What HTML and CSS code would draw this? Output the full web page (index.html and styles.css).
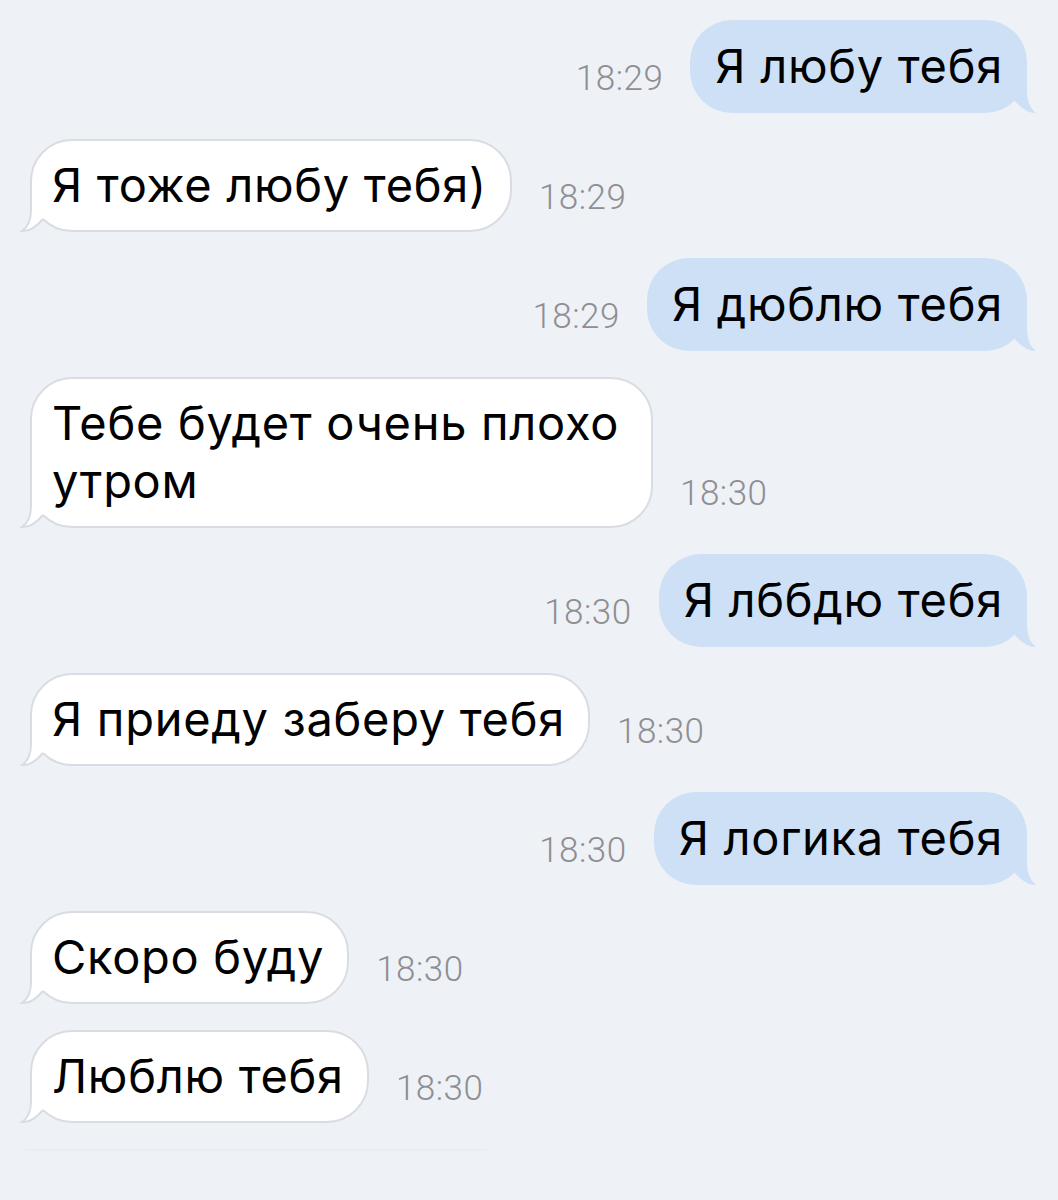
FILE: index.html
```html
<!DOCTYPE html>
<html lang="ru">
<head>
  <meta charset="UTF-8" />
  <meta name="viewport" content="width=device-width, initial-scale=1.0"/>
  <title>Chat</title>
  <link rel="stylesheet" href="styles.css">
</head>
<body>
  <div class="chat">
    <div class="row out">
      <span class="time">18:29</span>
      <div class="bubble">Я любу тебя<svg class="tail" viewBox="0 0 40 50"><path class="tail-fill" d="M10 0 L10 28 C10 38 7 45 1 50 C10 50 17 44 23 37 L25 36 L25 0 Z"/></svg></div>
    </div>
    <div class="row in">
      <div class="bubble">Я тоже любу тебя)<svg class="tail" viewBox="0 0 40 50"><path class="tail-fill" d="M10 0 L10 28 C10 38 7 45 1 50 C10 50 17 44 23 37 L25 36 L25 0 Z"/><path class="tail-line" d="M11 0 L11 28 C11 38 8 45 2 49 C10 50 17 44 23 37"/></svg></div>
      <span class="time">18:29</span>
    </div>
    <div class="row out">
      <span class="time">18:29</span>
      <div class="bubble">Я дюблю тебя<svg class="tail" viewBox="0 0 40 50"><path class="tail-fill" d="M10 0 L10 28 C10 38 7 45 1 50 C10 50 17 44 23 37 L25 36 L25 0 Z"/></svg></div>
    </div>
    <div class="row in">
      <div class="bubble">Тебе будет очень плохо утром<svg class="tail" viewBox="0 0 40 50"><path class="tail-fill" d="M10 0 L10 28 C10 38 7 45 1 50 C10 50 17 44 23 37 L25 36 L25 0 Z"/><path class="tail-line" d="M11 0 L11 28 C11 38 8 45 2 49 C10 50 17 44 23 37"/></svg></div>
      <span class="time">18:30</span>
    </div>
    <div class="row out">
      <span class="time">18:30</span>
      <div class="bubble">Я лббдю тебя<svg class="tail" viewBox="0 0 40 50"><path class="tail-fill" d="M10 0 L10 28 C10 38 7 45 1 50 C10 50 17 44 23 37 L25 36 L25 0 Z"/></svg></div>
    </div>
    <div class="row in">
      <div class="bubble">Я приеду заберу тебя<svg class="tail" viewBox="0 0 40 50"><path class="tail-fill" d="M10 0 L10 28 C10 38 7 45 1 50 C10 50 17 44 23 37 L25 36 L25 0 Z"/><path class="tail-line" d="M11 0 L11 28 C11 38 8 45 2 49 C10 50 17 44 23 37"/></svg></div>
      <span class="time">18:30</span>
    </div>
    <div class="row out">
      <span class="time">18:30</span>
      <div class="bubble">Я логика тебя<svg class="tail" viewBox="0 0 40 50"><path class="tail-fill" d="M10 0 L10 28 C10 38 7 45 1 50 C10 50 17 44 23 37 L25 36 L25 0 Z"/></svg></div>
    </div>
    <div class="row in">
      <div class="bubble">Скоро буду<svg class="tail" viewBox="0 0 40 50"><path class="tail-fill" d="M10 0 L10 28 C10 38 7 45 1 50 C10 50 17 44 23 37 L25 36 L25 0 Z"/><path class="tail-line" d="M11 0 L11 28 C11 38 8 45 2 49 C10 50 17 44 23 37"/></svg></div>
      <span class="time">18:30</span>
    </div>
    <div class="row in">
      <div class="bubble">Люблю тебя<svg class="tail" viewBox="0 0 40 50"><path class="tail-fill" d="M10 0 L10 28 C10 38 7 45 1 50 C10 50 17 44 23 37 L25 36 L25 0 Z"/><path class="tail-line" d="M11 0 L11 28 C11 38 8 45 2 49 C10 50 17 44 23 37"/></svg></div>
      <span class="time">18:30</span>
    </div>
    <div class="composer"></div>
  </div>
</body>
</html>
```

FILE: styles.css
```css
body {
  margin: 0;
  background: #eef2f7;
  font-family: 'Inter', 'Liberation Sans', sans-serif;
  color: #000;
}

.chat {
  display: flex;
  flex-direction: column;
  gap: 26px;
  padding: 20px 31px 0 30px;
}

.row {
  display: flex;
  align-items: flex-end;
  gap: 27px;
}

.row.out {
  justify-content: flex-end;
}

.time {
  font-family: 'Roboto', sans-serif;
  font-weight: 300;
  font-size: 35px;
  line-height: 34px;
  color: #8e8e93;
  margin-bottom: 17px;
  letter-spacing: 0.5px;
  white-space: nowrap;
}

.bubble {
  position: relative;
  font-size: 47px;
  line-height: 58px;
  letter-spacing: 0.7px;
  border-radius: 42px;
  max-width: 576px;
}

.out .bubble {
  background: #cde0f6;
  padding: 17px 24px 18px 25px;
}

.in .bubble {
  background: #fff;
  border: 2px solid #d9dde3;
  padding: 15px 23px 16px 20px;
}

.tail {
  position: absolute;
  width: 40px;
  height: 50px;
  overflow: visible;
}

.in .tail {
  left: -12px;
  bottom: -2px;
}

.out .tail {
  right: -10px;
  bottom: 0;
  transform: scaleX(-1);
}

.in .tail-fill {
  fill: #fff;
}

.out .tail-fill {
  fill: #cde0f6;
}

.tail-line {
  fill: none;
  stroke: #d9dde3;
  stroke-width: 2;
}

.composer {
  margin: 0 540px 0 -5px;
  height: 55px;
  border-top: 2px solid #e8edf3;
}
```
